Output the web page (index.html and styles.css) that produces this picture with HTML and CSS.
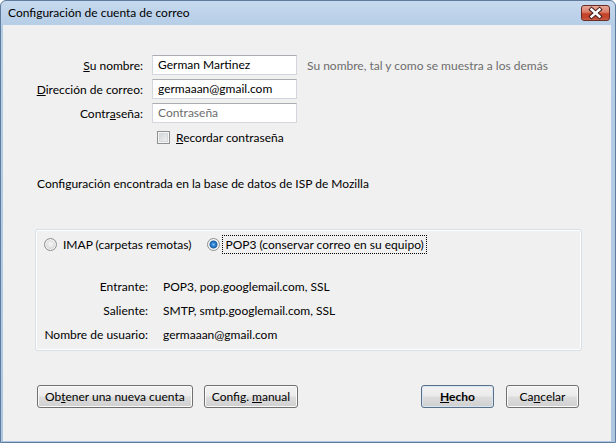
FILE: index.html
```html
<!DOCTYPE html>
<html lang="es">
<head>
<meta charset="utf-8">
<title>Configuración de cuenta de correo</title>
<link rel="stylesheet" href="styles.css">
</head>
<body>
<div class="window">
  <div class="titlebar">
    <span class="title">Configuración de cuenta de correo</span>
    <span class="close">
      <svg width="27" height="14" viewBox="0 0 27 14">
        <path d="M9.5 3.5 L17.5 10.5 M17.5 3.5 L9.5 10.5" stroke="#43201c" stroke-width="4.4" stroke-linecap="square" fill="none"/>
        <path d="M9.5 3.5 L17.5 10.5 M17.5 3.5 L9.5 10.5" stroke="#ffffff" stroke-width="2.4" stroke-linecap="square" fill="none"/>
      </svg>
    </span>
  </div>
  <div class="client">
    <div class="form">
      <span class="lbl"><u>S</u>u nombre:</span>
      <span class="field">German Martinez</span>
      <span class="hint">Su nombre, tal y como se muestra a los demás</span>

      <span class="lbl"><u>D</u>irección de correo:</span>
      <span class="field">germaaan@gmail.com</span>
      <span></span>

      <span class="lbl">Contr<u>a</u>seña:</span>
      <span class="field placeholder">Contraseña</span>
      <span></span>

      <span></span>
      <span class="check"><span class="box"></span><span><u>R</u>ecordar contraseña</span></span>
      <span></span>
    </div>

    <p class="found">Configuración encontrada en la base de datos de ISP de Mozilla</p>

    <div class="group">
      <div class="radios">
        <span class="radio-item"><span class="radio"></span><span class="rtext">IMAP (carpetas remotas)</span></span>
        <span class="radio-item"><span class="radio checked"></span><span class="rtext focus">POP3 (conservar correo en su equipo)</span></span>
      </div>
      <div class="details">
        <span class="dlbl">Entrante:</span><span>POP3, pop.googlemail.com, SSL</span>
        <span class="dlbl">Saliente:</span><span>SMTP, smtp.googlemail.com, SSL</span>
        <span class="dlbl">Nombre de usuario:</span><span>germaaan@gmail.com</span>
      </div>
    </div>

    <div class="buttons">
      <div class="btn-group">
        <span class="btn"><span>Ob<u>t</u>ener una nueva cuenta</span></span>
        <span class="btn"><span>Config. <u>m</u>anual</span></span>
      </div>
      <div class="btn-group right">
        <span class="btn default"><span><u>H</u>echo</span></span>
        <span class="btn"><span>Ca<u>n</u>celar</span></span>
      </div>
    </div>
  </div>
</div>
</body>
</html>
```

FILE: styles.css
```css
html, body {
  margin: 0;
  padding: 0;
  background: #ffffff;
}

body {
  font-family: Lato, "Liberation Sans", Arial, sans-serif;
  font-size: 12px;
  color: #000000;
}

u {
  text-decoration: underline;
  text-underline-offset: 1px;
}

.window {
  width: 616px;
  height: 443px;
  box-sizing: border-box;
  display: flex;
  flex-direction: column;
  border: 1px solid #5f7c9d;
  border-radius: 6px 6px 0 0;
  background: linear-gradient(to bottom, #c6d9ee 0, #b6cde7 24px, #aec7e2 100%);
}

.titlebar {
  height: 24px;
  flex: none;
  display: flex;
  align-items: flex-start;
  padding-left: 7px;
}

.title {
  line-height: 24px;
  font-size: 12px;
  color: #000000;
}

.close {
  margin-left: auto;
  margin-right: 5px;
  margin-top: 4px;
  width: 29px;
  height: 16px;
  box-sizing: border-box;
  border: 1px solid #6a2b25;
  border-radius: 3px;
  background: linear-gradient(to bottom, #e9a897 0%, #d97c66 45%, #c8432a 55%, #c04730 85%, #d0644c 100%);
  display: flex;
}

.close svg {
  display: block;
}

.client {
  flex: 1;
  margin: 0 4px 1px 2px;
  background: #f0f0f0;
  display: flex;
  flex-direction: column;
}

/* ---- form ---- */
.form {
  display: grid;
  grid-template-columns: 149px 145px auto;
  grid-auto-rows: 20px;
  row-gap: 4px;
  align-items: center;
  padding-top: 30px;
}

.lbl {
  text-align: right;
  padding-right: 9px;
}

.field {
  height: 20px;
  box-sizing: border-box;
  border: 1px solid #d3d7dd;
  border-top-color: #abadb3;
  background: #ffffff;
  padding-left: 5px;
  line-height: 18px;
  white-space: nowrap;
  overflow: hidden;
}

.field.placeholder {
  color: #6d6d6d;
}

.hint {
  padding-left: 10px;
  color: #6d6d6d;
  white-space: nowrap;
}

.check {
  display: flex;
  align-items: center;
  gap: 6px;
  padding-left: 5px;
}

.box {
  width: 13px;
  height: 13px;
  box-sizing: border-box;
  border: 1px solid #8e8f8f;
  background: linear-gradient(135deg, #cfd2d6 0%, #f4f4f4 100%);
  box-shadow: inset 0 0 0 1px #f6f6f6, inset 0 0 0 2px #d6d9dc;
}

/* ---- found text ---- */
.found {
  margin: 29px 0 0 34px;
  line-height: 15px;
}

/* ---- group ---- */
.group {
  margin: 38px 0 0 32px;
  width: 547px;
  height: 122px;
  box-sizing: border-box;
  border: 1px solid #d5dfe5;
  border-radius: 3px;
  box-shadow: inset 0 0 0 1px #ffffff;
  padding: 5px 0 0 8px;
}

.radios {
  display: flex;
  align-items: center;
  gap: 16px;
  height: 19px;
}

.radio-item {
  display: flex;
  align-items: center;
  gap: 6px;
}

.radio-item + .radio-item {
  gap: 2px;
}

.radio {
  width: 13px;
  height: 13px;
  box-sizing: border-box;
  border-radius: 50%;
  border: 1px solid #8e8f8f;
  background: radial-gradient(circle at 50% 45%, #f6f6f6 0, #e6e6e6 3px, #d2d2d2 6px);
  box-shadow: inset 0 0 0 1px #f4f4f4;
}

.radio.checked {
  background: radial-gradient(circle at 50% 50%, #7fc3f4 0, #2a7fd2 2px, #1d5f9f 3.5px, #e9eef2 4.5px, #f4f4f4 6px);
}

.rtext {
  line-height: 17px;
}

.rtext.focus {
  border: 1px dotted #000000;
  padding: 0 2px;
}

.details {
  display: grid;
  grid-template-columns: 104px auto;
  column-gap: 15px;
  grid-auto-rows: 24px;
  align-items: center;
  margin-top: 20px;
}

.dlbl {
  text-align: right;
}

/* ---- buttons ---- */
.buttons {
  display: flex;
  justify-content: space-between;
  margin-top: 34px;
  padding: 0 32px 0 34px;
}

.btn-group {
  display: flex;
  gap: 11px;
}

.btn-group.right {
  gap: 12px;
}

.btn {
  height: 23px;
  min-width: 73px;
  box-sizing: border-box;
  padding: 0 7px;
  border: 1px solid #707070;
  border-radius: 3px;
  background: linear-gradient(to bottom, #f2f2f2 0%, #ebebeb 48%, #dddddd 52%, #cfcfcf 100%);
  box-shadow: inset 0 0 0 1px #fbfbfb;
  display: flex;
  align-items: center;
  justify-content: center;
  white-space: nowrap;
}

.btn.default {
  font-weight: bold;
  border-color: #5b6f86;
  box-shadow: inset 0 0 0 1px #d6e6f4;
}
```
